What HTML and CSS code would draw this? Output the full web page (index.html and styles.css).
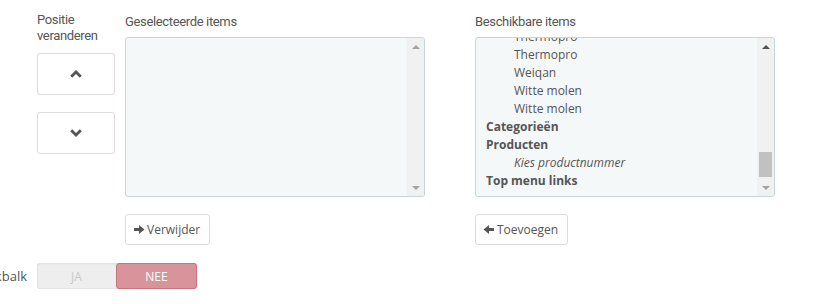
FILE: index.html
```html
<!DOCTYPE html>
<html>
<head>
    <link rel="stylesheet" href="styles.css">
</head>
<body>
    <div class="page">
        <div class="swap-row">
            <div class="col-move">
                <div class="col-label">Positie veranderen</div>
                <button class="btn btn-move">
                    <svg width="12" height="8" viewBox="0 0 12 8"><path d="M1.2 6.8 L6 2 L10.8 6.8" fill="none" stroke="#555" stroke-width="2.8"/></svg>
                </button>
                <button class="btn btn-move">
                    <svg width="12" height="8" viewBox="0 0 12 8"><path d="M1.2 1.2 L6 6 L10.8 1.2" fill="none" stroke="#555" stroke-width="2.8"/></svg>
                </button>
            </div>
            <div class="col-list">
                <div class="col-label">Geselecteerde items</div>
                <div class="listbox">
                    <div class="list-items"></div>
                    <div class="scrollbar">
                        <div class="sb-arrow up"></div>
                        <div class="sb-track"></div>
                        <div class="sb-arrow down"></div>
                    </div>
                </div>
                <button class="btn btn-action">
                    <svg width="12" height="11" viewBox="0 0 12 11"><path d="M1 4 H6 V1 L11.5 5.5 L6 10 V7 H1 Z" fill="#555"/></svg>
                    Verwijder
                </button>
            </div>
            <div class="col-list avail">
                <div class="col-label">Beschikbare items</div>
                <div class="listbox">
                    <div class="list-items">
                        <div class="scrolled">
                            <div class="opt sub">Thermopro</div>
                            <div class="opt sub">Thermopro</div>
                            <div class="opt sub">Weiqan</div>
                            <div class="opt sub">Witte molen</div>
                            <div class="opt sub">Witte molen</div>
                            <div class="opt group">Categorieën</div>
                            <div class="opt group">Producten</div>
                            <div class="opt sub hint">Kies productnummer</div>
                            <div class="opt group">Top menu links</div>
                        </div>
                    </div>
                    <div class="scrollbar">
                        <div class="sb-arrow up active"></div>
                        <div class="sb-track"><div class="sb-thumb"></div></div>
                        <div class="sb-arrow down"></div>
                    </div>
                </div>
                <button class="btn btn-action">
                    <svg width="12" height="11" viewBox="0 0 12 11"><path d="M11 4 H6 V1 L0.5 5.5 L6 10 V7 H11 Z" fill="#555"/></svg>
                    Toevoegen
                </button>
            </div>
        </div>
        <div class="switch-row">
            <div class="switch-label"><span>Zoekbalk</span></div>
            <div class="switch">
                <span class="switch-opt">JA</span>
                <span class="switch-opt on">NEE</span>
            </div>
        </div>
    </div>
</body>
</html>
```
FILE: styles.css
```css
body {
    margin: 0;
    background-color: #fff;
    font-family: "Open Sans", sans-serif;
    color: #555;
}

.page {
    padding-top: 12px;
}

.swap-row {
    display: flex;
    padding-left: 37px;
}

.col-label {
    font-family: Roboto, "Open Sans", sans-serif;
    font-size: 13px;
    letter-spacing: -0.35px;
    line-height: 16px;
    color: #555;
    height: 25px;
}

.col-move {
    width: 78px;
    margin-right: 10px;
    display: flex;
    flex-direction: column;
}

.col-move .col-label {
    height: 41px;
}

.btn {
    background-color: #fff;
    border: 1px solid #dcdcdc;
    border-radius: 3px;
    color: #555;
    font-family: "Open Sans", sans-serif;
    font-size: 12px;
    cursor: pointer;
    padding: 0;
}

.btn-move {
    width: 78px;
    height: 42px;
    margin-bottom: 17px;
    display: flex;
    align-items: center;
    justify-content: center;
}

.col-list {
    width: 300px;
    display: flex;
    flex-direction: column;
    align-items: flex-start;
}

.col-list .col-label {
    padding-top: 2px;
    height: 23px;
}

.avail {
    margin-left: 50px;
}

.listbox {
    width: 298px;
    height: 158px;
    border: 1px solid #c7d6db;
    border-radius: 3px;
    background-color: #f5f8f9;
    display: flex;
    overflow: hidden;
}

.list-items {
    flex: 1;
    overflow: hidden;
    font-size: 12px;
}

.scrolled {
    margin-top: -10px;
}

.opt {
    height: 18px;
    line-height: 18px;
    white-space: nowrap;
}

.opt.sub {
    padding-left: 38px;
}

.opt.group {
    padding-left: 10px;
    font-weight: bold;
}

.opt.hint {
    font-style: italic;
}

.scrollbar {
    width: 17px;
    background-color: #f1f1f1;
    display: flex;
    flex-direction: column;
}

.sb-arrow {
    height: 17px;
    display: flex;
    align-items: center;
    justify-content: center;
}

.sb-arrow.up::before {
    content: "";
    border-left: 4px solid transparent;
    border-right: 4px solid transparent;
    border-bottom: 4px solid #a3a3a3;
}

.sb-arrow.down::before {
    content: "";
    border-left: 4px solid transparent;
    border-right: 4px solid transparent;
    border-top: 4px solid #a3a3a3;
}

.sb-arrow.up.active::before {
    border-bottom-color: #505050;
}

.sb-track {
    flex: 1;
    display: flex;
    flex-direction: column;
    justify-content: flex-end;
    align-items: center;
}

.sb-thumb {
    width: 13px;
    height: 25px;
    margin-bottom: 2px;
    background-color: #c1c1c1;
}

.btn-action {
    margin-top: 17px;
    height: 31px;
    padding: 0 9px 0 7px;
    display: flex;
    align-items: center;
    gap: 2px;
}

.switch-row {
    display: flex;
    align-items: center;
    margin-top: 18px;
}

.switch-label {
    width: 27px;
    margin-right: 10px;
    display: flex;
    justify-content: flex-end;
    font-size: 13px;
    white-space: nowrap;
}

.switch {
    display: flex;
    width: 160px;
    height: 26px;
    background-color: #eee;
    border-radius: 3px;
    box-shadow: inset 0 0 0 1px #e3e3e3, inset 0 1px 2px rgba(0, 0, 0, 0.08);
}

.switch-opt {
    flex: 1;
    display: flex;
    align-items: center;
    justify-content: center;
    font-size: 12px;
    color: #c3ccc8;
}

.switch-opt.on {
    background-color: #d9939a;
    border: 1px solid #c8747d;
    border-radius: 3px;
    color: #fff;
}
```
